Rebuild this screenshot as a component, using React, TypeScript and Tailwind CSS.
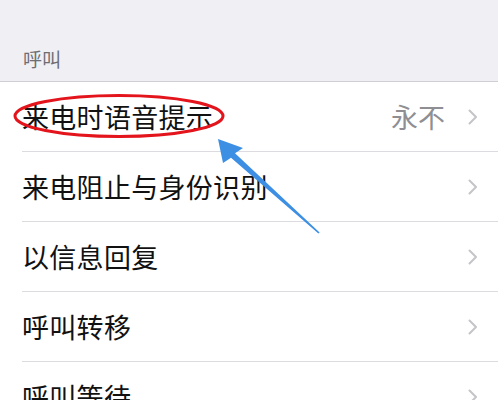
import React from 'react';

interface Row {
  label: string;
  value?: string;
}

const rows: Row[] = [
  { label: '来电时语音提示', value: '永不' },
  { label: '来电阻止与身份识别' },
  { label: '以信息回复' },
  { label: '呼叫转移' },
  { label: '呼叫等待' },
];

const Chevron: React.FC = () => (
  <svg width="10" height="16" viewBox="0 0 10 16" className="shrink-0">
    <path d="M1.5 1.5 L8 8 L1.5 14.5" fill="none" stroke="#c4c4c9" strokeWidth="2" strokeLinecap="round" strokeLinejoin="round" />
  </svg>
);

const App: React.FC = () => {
  return (
    <div
      className="relative w-[498px] h-[400px] overflow-hidden bg-[#efeff4]"
      style={{ fontFamily: '"Noto Sans CJK SC", "Noto Sans", sans-serif' }}
    >
      {/* section header */}
      <div className="h-[81px] flex items-end pl-[23px] pb-[13px]">
        <span className="text-[19px] leading-none text-[#6d6d72]">呼叫</span>
      </div>

      <div className="bg-white border-t border-[#cfcfd3]">
        {rows.map(row => (
          <div key={row.label} className="pl-[22px]">
            <div className="h-[70px] flex items-center border-b border-[#dcdce0] pr-[20px]">
              <span className="flex-1 text-[27px] leading-none text-[#111] tracking-[0.3px]">{row.label}</span>
              {row.value && (
                <span className="text-[27px] leading-none text-[#8e8e93] mr-[23px]">{row.value}</span>
              )}
              <Chevron />
            </div>
          </div>
        ))}
      </div>

      {/* annotation: red ellipse + blue arrow */}
      <svg className="absolute left-0 top-0 pointer-events-none" width="498" height="400" viewBox="0 0 498 400">
        <ellipse cx="119" cy="116" rx="104" ry="20.5" fill="none" stroke="#e3141c" strokeWidth="3" />
        <polygon points="218,139 243,148 235,153.3 319.6,232.4 318.4,233.6 231,157.7 223,163" fill="#3d8fe3" />
      </svg>
    </div>
  );
};

export default App;
